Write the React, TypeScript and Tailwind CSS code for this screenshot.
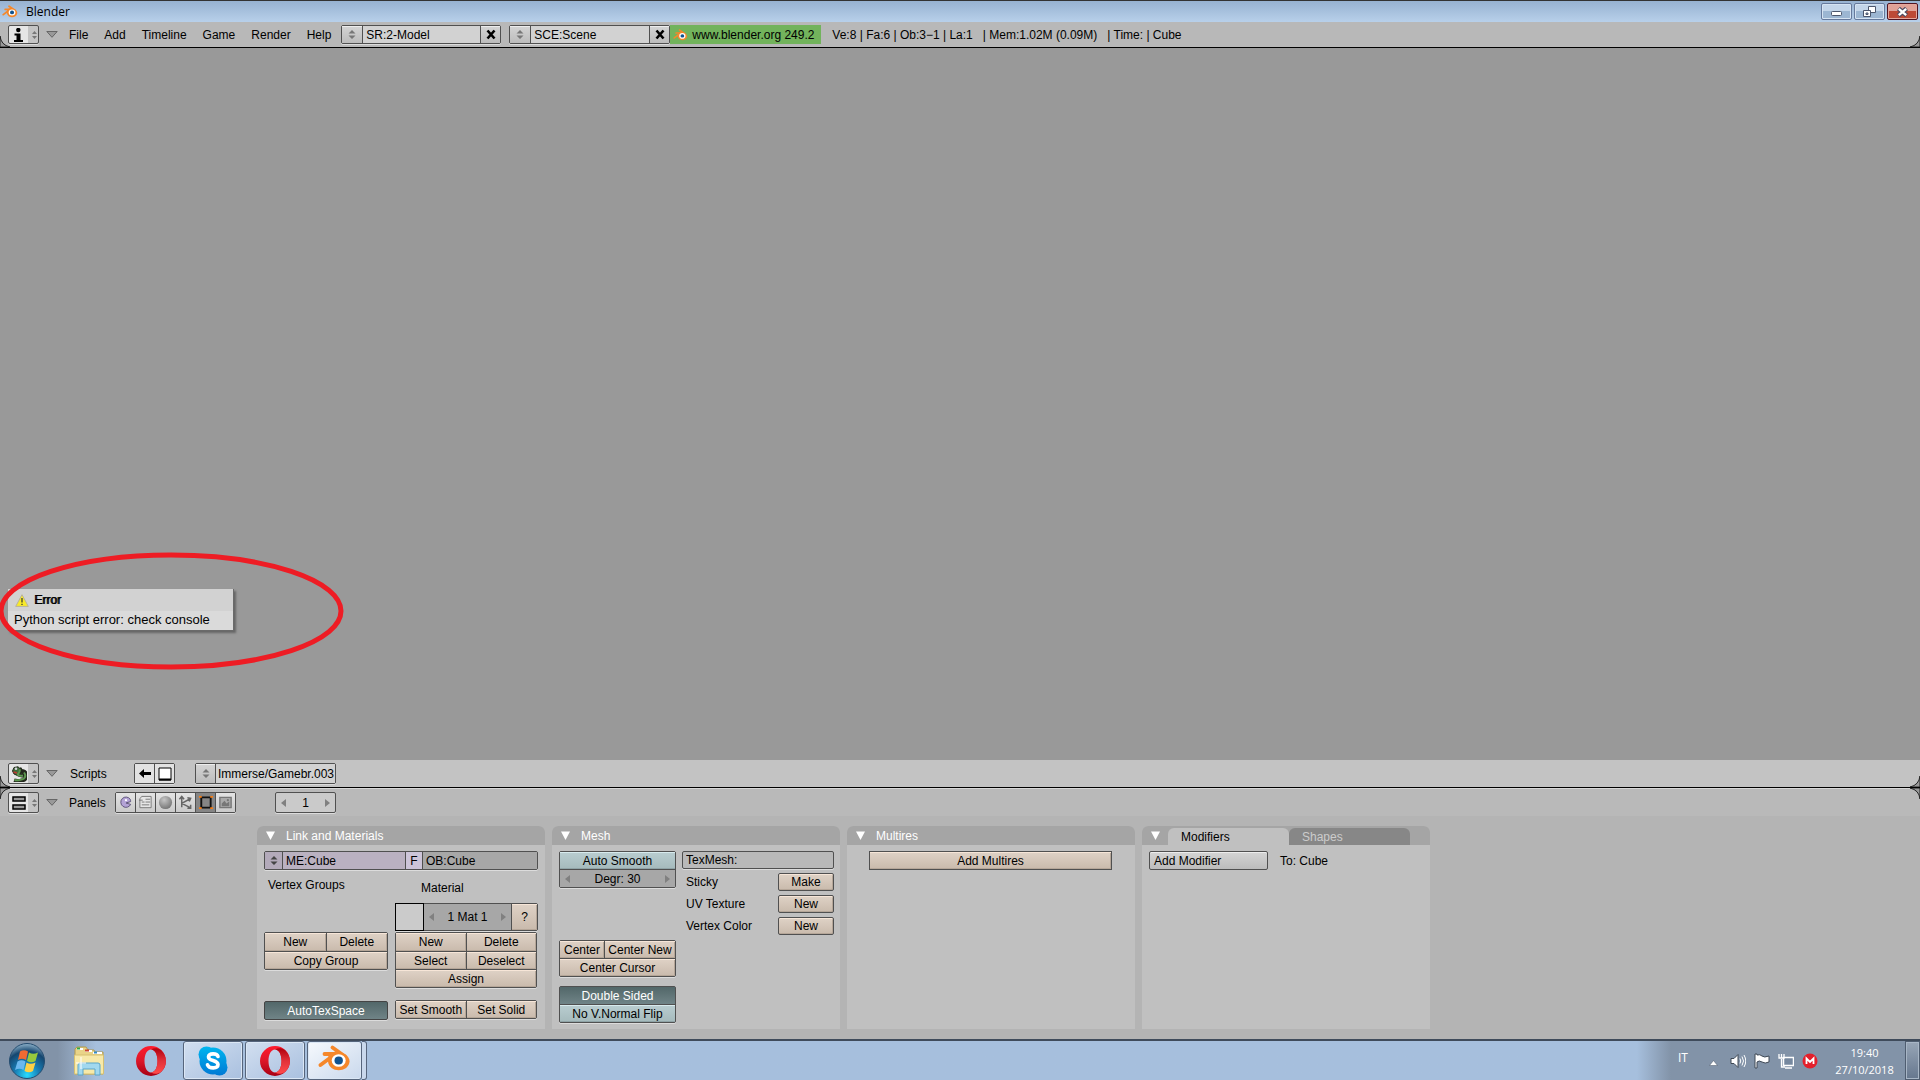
import type { ReactNode } from "react";

const ui = "font-['Liberation_Sans',Arial,sans-serif] text-[12px] leading-[16px] text-black";
const segoe = "font-['Open_Sans','Noto_Sans',sans-serif]";

const tan =
  "bg-linear-to-b from-[#dfd2c6] to-[#c9baac] shadow-[inset_0_1px_0_#f7e6d8,inset_-1px_-1px_0_#b5a698] text-center whitespace-nowrap";
const teal =
  "bg-linear-to-b from-[#b9cdd0] to-[#a5babc] shadow-[inset_0_1px_0_#d8ebee,inset_0_-1px_0_#8fa3a6] text-center whitespace-nowrap";
const tealOn =
  "bg-linear-to-b from-[#526769] to-[#708487] text-white text-center whitespace-nowrap";
const grey =
  "bg-linear-to-b from-[#d4d4d4] to-[#bcbcbc] shadow-[inset_0_1px_0_#ededed]";
const frame = "gap-px rounded-[2px] border border-[#505050] bg-[#505050] shadow-[0_1px_0_#dcdcdc]";

function BlenderLogo({ className }: { className: string }) {
  return (
    <svg viewBox="0 0 33 27" className={className} aria-hidden="true">
      <g stroke="#f5872a" strokeWidth="3.800" strokeLinecap="round" fill="none">
        <path d="M2.500 20 14 11.500M6.500 9H20M14.500 2.500 27 11.500" />
      </g>
      <path d="M13 8 20 5.500 27.500 9.500Q32 13 31.500 17C30 28 11 28 10 16.500V12Z" fill="#f5872a" />
      <ellipse cx="20.700" cy="15.500" rx="7" ry="6.300" fill="#fff" />
      <ellipse cx="20.700" cy="15.500" rx="4.200" ry="3.900" fill="#11538f" />
    </svg>
  );
}

function UpDown({ className = "text-[#777]" }: { className?: string }) {
  return (
    <svg viewBox="0 0 8 9" className={`h-[9px] w-2 shrink-0 ${className}`} aria-hidden="true">
      <path d="M4 0 7.500 3.500H.5ZM4 9 .5 5.500h7Z" fill="currentColor" />
    </svg>
  );
}

function TypeButton({ label, children }: { label: string; children: ReactNode }) {
  return (
    <button
      aria-label={label}
      className="flex h-[21px] w-[31px] shrink-0 items-center rounded-[2px] border border-[#505050] bg-linear-to-r from-[#e6e6e6] from-65% to-[#c4c4c4] to-65% shadow-[0_1px_0_#dcdcdc]"
    >
      <span className="flex w-5 justify-center">{children}</span>
      <svg viewBox="0 0 5 8" className="ml-[3px] h-2 w-[5px]" aria-hidden="true">
        <path d="M2.500 0 5 3H0ZM2.500 8 0 5h5Z" fill="#777" />
      </svg>
    </button>
  );
}

function Collapse() {
  return (
    <button aria-label="Toggle menus" className="ml-[7px] shrink-0">
      <svg viewBox="0 0 12 7" className="h-[7px] w-3">
        <path d="M.8.5h10.400L6 6.300Z" fill="#999" stroke="#666" />
      </svg>
    </button>
  );
}

function DataPicker({ label, value, width }: { label: string; value: string; width: string }) {
  return (
    <div className={`flex h-[19px] shrink-0 ${frame} ${width}`}>
      <button aria-label={`Browse ${label}`} className={`flex w-5 shrink-0 items-center justify-center ${grey}`}>
        <UpDown />
      </button>
      <input aria-label={label} defaultValue={value} className="w-0 min-w-0 flex-1 bg-[#d2d2d2] pl-[3px]" />
      <button aria-label={`Remove ${label}`} className={`flex w-[19px] shrink-0 items-center justify-center ${grey}`}>
        <svg viewBox="0 0 10 11" className="h-[11px] w-2.5" aria-hidden="true">
          <path d="M1.500 1.500 8.500 9.500M8.500 1.500 1.500 9.500" stroke="#000" strokeWidth="2.600" />
        </svg>
      </button>
    </div>
  );
}

function Panel({ title, children }: { title: string; children: ReactNode }) {
  return (
    <section className="flex w-72 shrink-0 flex-col bg-[#c0c0c0] rounded-t-md">
      <h2 className="flex h-[19px] items-center gap-[11px] rounded-t-md bg-[#a5a5a5] pl-[9px] font-normal text-white">
        <White />
        {title}
      </h2>
      <div className="flex-1 pt-1.5 pb-1.5 pl-[7px]">{children}</div>
    </section>
  );
}

function White() {
  return (
    <svg viewBox="0 0 9 9" className="h-[9px] w-[9px] shrink-0" aria-hidden="true">
      <path d="M0 .5h9L4.500 9Z" fill="#fff" />
    </svg>
  );
}

function Stepper({ label, left = "Decrease", right = "Increase", className }: { label: string; left?: string; right?: string; className: string }) {
  return (
    <div className={`flex items-center justify-between px-[5px] ${className}`}>
      <button aria-label={left}>
        <svg viewBox="0 0 5 8" className="h-2 w-[5px]"><path d="M5 0v8L0 4Z" fill="#808080" /></svg>
      </button>
      <span>{label}</span>
      <button aria-label={right}>
        <svg viewBox="0 0 5 8" className="h-2 w-[5px]"><path d="M0 0v8l5-4Z" fill="#808080" /></svg>
      </button>
    </div>
  );
}

function TitleBar() {
  const win =
    "flex h-[17px] w-[31px] items-center justify-center rounded-[2px] border border-[#66799b] bg-linear-to-b from-[#c3d5e9] from-50% to-[#9cb6d2] to-50% shadow-[inset_0_0_0_1px_#d5e3f2]";
  return (
    <header className={`flex h-[22px] shrink-0 items-center border-t border-[#333] bg-linear-to-b from-[#97b2d1] to-[#b8d0ea] pl-[2px] text-[12px] text-black ${segoe}`}>
      <BlenderLogo className="mb-px h-[13px] w-4" />
      <span className="ml-2">Blender</span>
      <div className="mr-[2px] ml-auto flex gap-[2px]">
        <button aria-label="Minimize" className={win}>
          <svg viewBox="0 0 12 6" className="mt-1 h-1.5 w-3"><rect x=".5" y=".5" width="10" height="4" rx="1" fill="#fff" stroke="#4c566c" /></svg>
        </button>
        <button aria-label="Restore" className={win}>
          <svg viewBox="0 0 13 12" className="h-3 w-[13px]">
            <path d="M5.500.5h7v6h-7Z" fill="#fff" stroke="#4c566c" />
            <path d="M.5 4.500h7v6h-7Z" fill="#fff" stroke="#4c566c" />
            <path d="M3 7h2v1.500H3Z" fill="#9cb6d2" stroke="#4c566c" />
          </svg>
        </button>
        <button aria-label="Close" className="flex h-[17px] w-[31px] items-center justify-center rounded-[2px] border border-[#511521] bg-linear-to-b from-[#e0a297] from-50% to-[#bd4a36] to-50% shadow-[inset_0_0_0_1px_#e5a79c]">
          <svg viewBox="0 0 13 10" className="h-2.5 w-[13px]">
            <path d="M2.500 1.500 10.500 8.500M10.500 1.500 2.500 8.500" stroke="#4c4a60" strokeWidth="4.600" />
            <path d="M2.800 1.800 10.200 8.200M10.200 1.800 2.800 8.200" stroke="#fff" strokeWidth="2.400" />
          </svg>
        </button>
      </div>
    </header>
  );
}

function InfoHeader() {
  return (
    <div className="relative flex h-[26px] shrink-0 items-center border-b border-black bg-[#b8b8b8] pl-2">
      <button aria-label="Window type: User Preferences" className="flex h-[19px] w-[31px] shrink-0 items-center rounded-[2px] border border-[#505050] bg-linear-to-r from-[#e6e6e6] from-65% to-[#c4c4c4] to-65% shadow-[0_1px_0_#dcdcdc]">
        <svg viewBox="0 0 9 14" className="ml-[5px] h-[14px] w-[9px]"><circle cx="4.300" cy="2" r="2.200" /><path d="M.5 5.500H6.500V12H9v2H0v-2h2.500V7.500H.5Z" /></svg>
        <svg viewBox="0 0 5 8" className="ml-[9px] h-2 w-[5px]"><path d="M2.500 0 5 3H0ZM2.500 8 0 5h5Z" fill="#777" /></svg>
      </button>
      <Collapse />
      <nav className="ml-[11px] flex shrink-0 gap-4">
        {["File", "Add", "Timeline", "Game", "Render", "Help"].map((m) => (
          <button key={m}>{m}</button>
        ))}
      </nav>
      <div className="ml-2.5 flex shrink-0 items-center">
        <DataPicker label="screen" value="SR:2-Model" width="w-40" />
        <div className="w-2" />
        <DataPicker label="scene" value="SCE:Scene" width="w-[161px]" />
      </div>
      <a href="#blender" className="flex h-[19px] w-[151px] shrink-0 items-center gap-1 overflow-hidden bg-[#72b35c] pl-[3px] whitespace-nowrap">
        <BlenderLogo className="h-3 w-[15px] shrink-0" />
        www.blender.org 249.2
      </a>
      <p className="ml-[11px] whitespace-pre">{"Ve:8 | Fa:6 | Ob:3\u22121 | La:1   | Mem:1.02M (0.09M)   | Time: | Cube"}</p>
      <svg viewBox="0 0 10 11" className="absolute bottom-0 left-0 h-[11px] w-2.5"><path d="M0 0Q1 9 10 11H0Z" fill="#999" stroke="#222" /></svg>
      <svg viewBox="0 0 10 11" className="absolute right-0 bottom-0 h-[11px] w-2.5"><path d="M10 0Q9 9 0 11H10Z" fill="#999" stroke="#222" /></svg>
    </div>
  );
}

function ErrorPopup() {
  return (
    <div role="alert" className="absolute bottom-[129px] left-2 h-[42px] w-[226px] border-r border-b border-[#6a6a6a] bg-[#dadada] shadow-[2px_2px_2px_#666]">
      <div className="flex h-[22px] items-center bg-[#d2d2d2] pl-[7px]">
        <svg viewBox="0 0 14 13" className="h-[13px] w-[14px]"><path d="M7 .7 13.300 12.400H.7Z" fill="#f8ea28" stroke="#b8b29a" /><path d="M7 4v4.500M7 9.700v1.300" stroke="#333" strokeWidth="1.200" /></svg>
        <strong className="ml-[5px] font-normal [text-shadow:1px_0_0_#000]">Error</strong>
      </div>
      <p className="pt-px pl-1.5 text-[13px] whitespace-nowrap">Python script error: check console</p>
    </div>
  );
}

function ScriptsHeader() {
  return (
    <div className="relative flex h-7 shrink-0 items-center border-b border-black bg-[#c3c3c3] pl-2">
      <TypeButton label="Window type: Scripts">
        <svg viewBox="0 0 16 16" className="h-4 w-4">
          <path d="M8.500 2.500c2 2 .5 3.500-1 5s3 1.500 4.500 2c2.500-1-.5-2 .5-4 3 1 3.500 5 1.500 7.500-2 2-8 2.500-11 1.500" fill="none" stroke="#23281c" strokeWidth="4" />
          <path d="M1.500 5 3 1.500 7 .8 10 3.500 9 8 6.500 9.500 3 8Z" fill="#3f6a3b" stroke="#23281c" />
          <path d="M8.500 3.500c1 2-.5 3-1.500 4.500s3.500 2 5 1.500M13 6.500c1.500 2 1.500 4.500 0 6-2 1.500-7 2-9.500 1.500" fill="none" stroke="#5d9650" strokeWidth="2" />
          <path d="M2.500 6 6 7" stroke="#c0392f" strokeWidth="1.600" />
          <circle cx="5" cy="2.800" r="1.300" fill="#d5d5dd" />
        </svg>
      </TypeButton>
      <Collapse />
      <button className="ml-3 w-10 text-left">Scripts</button>
      <div className={`ml-6 flex h-[21px] ${frame}`}>
        <button aria-label="Back" className="flex w-[19px] items-center justify-center bg-[#e2e2e2]">
          <svg viewBox="0 0 12 9" className="h-[9px] w-3"><path d="M5 0v3h7v3H5v3L0 4.500Z" /></svg>
        </button>
        <button aria-label="Full window" className="flex w-[19px] items-center justify-center bg-[#e2e2e2]">
          <svg viewBox="0 0 14 14" className="h-[14px] w-[14px]"><path d="M1 1h12v12H1Z" fill="#fff" stroke="#000" /><path d="M1 12.500h12" stroke="#000" strokeWidth="2" /></svg>
        </button>
      </div>
      <div className={`ml-5 flex h-[21px] w-[141px] ${frame}`}>
        <button aria-label="Browse scripts" className={`flex w-[19px] shrink-0 items-center justify-center ${grey}`}><UpDown /></button>
        <input aria-label="Script" defaultValue="Immerse/Gamebr.003" className="w-0 min-w-0 flex-1 bg-[#d2d2d2] pl-[2px]" />
      </div>
      <svg viewBox="0 0 10 11" className="absolute bottom-0 left-0 h-[11px] w-2.5"><path d="M0 0Q1 9 10 11H0Z" fill="#999" stroke="#222" /></svg>
      <svg viewBox="0 0 10 11" className="absolute right-0 bottom-0 h-[11px] w-2.5"><path d="M10 0Q9 9 0 11H10Z" fill="#999" stroke="#222" /></svg>
    </div>
  );
}

const contexts: { name: string; icon: ReactNode }[] = [
  {
    name: "Logic",
    icon: (
      <>
        <path d="M13 4.500A5.500 5.500 0 1 0 13.500 10L8.500 8.500 13.500 7A5 5 0 0 0 13 4.500Z" fill="#b4a3d6" stroke="#5b5177" />
        <circle cx="8.500" cy="5.500" r="1.200" fill="#fff" />
      </>
    ),
  },
  {
    name: "Script",
    icon: (
      <>
        <path d="M4 1.500h10v12H2V4Z" fill="#e6e6e6" stroke="#777" />
        <path d="M8 4.500h5M4 7.500h3M8 7.500h5M4 10.500h8M1 5.500h4" stroke="#777" />
      </>
    ),
  },
  {
    name: "Shading",
    icon: (
      <>
        <defs>
          <radialGradient id="ball" cx=".4" cy=".3" r=".7"><stop offset="0" stopColor="#c5c5c5" /><stop offset="1" stopColor="#777" /></radialGradient>
        </defs>
        <circle cx="8" cy="8" r="7" fill="url(#ball)" />
      </>
    ),
  },
  {
    name: "Object",
    icon: <path d="M4 13V2M1.500 4.500 4 1.500l2.500 3M4 9l9-5M10 3l3.500.5L12 7M4 9l9 4.500M13.500 10.500v3.500H10" fill="none" stroke="#666" strokeWidth="1.600" />,
  },
  {
    name: "Editing",
    icon: (
      <>
        <path d="M3.500 2.500h10v11h-10Z" fill="none" stroke="#111" strokeWidth="2" />
        <path d="M1 1h3v2H1ZM13 1h3v2h-3ZM1 13h3v2H1ZM13 13h3v2h-3Z" fill="#f47c14" />
      </>
    ),
  },
  {
    name: "Scene",
    icon: (
      <>
        <path d="M2 2.500h12v11H2Z" fill="#aaa" stroke="#777" strokeWidth="1.500" />
        <path d="M4 12V9l3-3 2 3 3-2v5Z" fill="#777" />
        <circle cx="10.500" cy="5.500" r="1.200" fill="#777" />
      </>
    ),
  },
];

function ButtonsHeader() {
  return (
    <div className="relative flex h-7 shrink-0 items-center border-t border-[#d8d8d8] bg-[#b9b9b9] pl-2">
      <TypeButton label="Window type: Buttons">
        <svg viewBox="0 0 14 14" className="h-[14px] w-[14px]"><path d="M1 1h12v4H1ZM1 9h12v4H1Z" fill="#999" stroke="#000" strokeWidth="1.500" /></svg>
      </TypeButton>
      <Collapse />
      <button className="ml-[11px] w-10 text-left">Panels</button>
      <div className={`ml-1.5 flex h-[21px] ${frame}`}>
        {contexts.map((c) => (
          <button
            key={c.name}
            aria-label={c.name}
            className={
              c.name === "Editing"
                ? "flex w-[19px] items-center justify-center bg-[#858585]"
                : "flex w-[19px] items-center justify-center bg-linear-to-b from-[#e4e4e4] to-[#cacaca]"
            }
          >
            <svg viewBox="0 0 16 16" className="h-[15px] w-[15px]">{c.icon}</svg>
          </button>
        ))}
      </div>
      <Stepper label="1" className="ml-[39px] h-[21px] w-[61px] rounded-[2px] border border-[#505050] bg-[#cacaca] shadow-[0_1px_0_#dcdcdc]" />
      <svg viewBox="0 0 10 11" className="absolute -top-px left-0 h-[11px] w-2.5"><path d="M0 11Q1 2 10 0H0Z" fill="#999" stroke="#222" /></svg>
      <svg viewBox="0 0 10 11" className="absolute -top-px right-0 h-[11px] w-2.5"><path d="M10 11Q9 2 0 0H10Z" fill="#999" stroke="#222" /></svg>
    </div>
  );
}

function LinkPanel() {
  return (
    <Panel title="Link and Materials">
      <div className={`flex h-[19px] w-[274px] ${frame}`}>
        <button aria-label="Browse mesh data" className="flex w-[17px] shrink-0 items-center justify-center bg-[#b3aaba]"><UpDown className="text-[#444]" /></button>
        <input aria-label="Mesh name" defaultValue="ME:Cube" className="w-0 min-w-0 flex-1 bg-[#bab1c1] pl-[3px]" />
        <button className="w-4 shrink-0 bg-[#cdc5d9]">F</button>
        <input aria-label="Object name" defaultValue="OB:Cube" className="w-[114px] shrink-0 bg-[#a7a7a7] pl-[3px]" />
      </div>
      <div className="flex gap-[7px]">
        <div className="w-[124px]">
          <p className="mt-[7px] pl-1">Vertex Groups</p>
          <div className={`mt-[39px] grid grid-cols-2 ${frame}`}>
            <button className={`h-[18px] ${tan}`}>New</button>
            <button className={`h-[18px] ${tan}`}>Delete</button>
            <button className={`col-span-2 h-[17px] ${tan}`}>Copy Group</button>
          </div>
          <button className={`mt-[31px] block h-[19px] w-full rounded-[2px] border border-[#444] shadow-[0_1px_0_#dcdcdc] ${tealOn}`}>AutoTexSpace</button>
        </div>
        <div className="w-[143px]">
          <p className="mt-2.5 pl-[26px]">Material</p>
          <div className={`mt-[7px] flex h-7 ${frame}`}>
            <button aria-label="Material color" className="w-[27px] bg-[#cbcbcb] outline outline-black" />
            <Stepper label="1 Mat 1" left="Previous material" right="Next material" className="flex-1 bg-[#a7a7a7]" />
            <button className={`w-[25px] ${tan}`}>?</button>
          </div>
          <div className={`mt-px grid w-[142px] grid-cols-2 ${frame}`}>
            <button className={`h-[18px] ${tan}`}>New</button>
            <button className={`h-[18px] ${tan}`}>Delete</button>
            <button className={`h-[17px] ${tan}`}>Select</button>
            <button className={`h-[17px] ${tan}`}>Deselect</button>
            <button className={`col-span-2 h-[17px] ${tan}`}>Assign</button>
          </div>
          <div className={`mt-3 grid h-[19px] w-[142px] grid-cols-2 ${frame}`}>
            <button className={tan}>Set Smooth</button>
            <button className={tan}>Set Solid</button>
          </div>
        </div>
      </div>
    </Panel>
  );
}

function MeshPanel() {
  return (
    <Panel title="Mesh">
      <div className="flex gap-[6px]">
        <div className="w-[117px]">
          <div className={`grid ${frame}`}>
            <button className={`h-[17px] ${teal}`}>Auto Smooth</button>
            <Stepper label="Degr: 30" className="h-[17px] bg-[#a7a7a7]" />
          </div>
          <div className={`mt-[52px] grid grid-cols-[44px_1fr] ${frame}`}>
            <button className={`h-[17px] ${tan}`}>Center</button>
            <button className={`h-[17px] ${tan}`}>Center New</button>
            <button className={`col-span-2 h-[17px] ${tan}`}>Center Cursor</button>
          </div>
          <div className={`mt-[9px] grid ${frame}`}>
            <button className={`h-[17px] ${tealOn}`}>Double Sided</button>
            <button className={`h-[17px] ${teal}`}>No V.Normal Flip</button>
          </div>
        </div>
        <div className="w-[152px]">
          <input aria-label="TexMesh" defaultValue="TexMesh:" className="block h-[18px] w-full rounded-[2px] border border-[#505050] bg-[#b9b9b9] pl-[3px] shadow-[0_1px_0_#dcdcdc]" />
          <div className="mt-1 grid gap-[4px]">
            {[["Sticky", "Make"], ["UV Texture", "New"], ["Vertex Color", "New"]].map(([name, action]) => (
              <div key={name} className="flex items-center justify-between pl-1">
                <span>{name}</span>
                <button aria-label={`${action} ${name}`} className={`h-[18px] w-14 rounded-[2px] border border-[#505050] ${tan}`}>{action}</button>
              </div>
            ))}
          </div>
        </div>
      </div>
    </Panel>
  );
}

function ModifiersPanel() {
  return (
    <section className="w-72 shrink-0 rounded-t-md bg-[#c0c0c0]">
      <div className="flex h-[19px] items-end rounded-t-md bg-[#a5a5a5] pl-[9px]">
        <span className="mb-[5px]"><White /></span>
        <div role="tablist" className="ml-2 flex">
          <button role="tab" aria-selected="true" className="h-[17px] w-[121px] rounded-t-md bg-[#c0c0c0] pl-[13px] text-left">Modifiers</button>
          <button role="tab" aria-selected="false" className="h-[17px] w-[121px] rounded-t-md bg-[#878787] pl-[13px] text-left text-[#ccc]">Shapes</button>
        </div>
      </div>
      <div className="flex items-center gap-3 pt-1.5 pl-[7px]">
        <button className={`h-[19px] w-[119px] rounded-[2px] border border-[#505050] pl-1 text-left ${grey}`}>Add Modifier</button>
        <span>To: Cube</span>
      </div>
    </section>
  );
}

function Opera({ id }: { id: string }) {
  return (
    <svg viewBox="0 0 30 30" className="h-[30px] w-[30px]" aria-hidden="true">
      <defs>
        <linearGradient id={id} x1="0" y1="0" x2="0" y2="1"><stop offset="0" stopColor="#ff1b2d" /><stop offset=".5" stopColor="#dc1729" /><stop offset="1" stopColor="#a70014" /></linearGradient>
        <linearGradient id={`${id}-side`} x1="0" y1="0" x2="0" y2="1"><stop offset="0" stopColor="#b0000e" /><stop offset=".5" stopColor="#e2323a" /><stop offset="1" stopColor="#ff4b4b" /></linearGradient>
      </defs>
      <path fillRule="evenodd" d="M15 0a15 15 0 1 0 0 30A15 15 0 1 0 15 0Zm0 3.500C19 3.500 21.500 8.500 21.500 15S19 26.500 15 26.500 8.500 21.500 8.500 15 11 3.500 15 3.500Z" fill={`url(#${id})`} />
      <path d="M15 3.500c3.500-2 7-1.500 10 .5 6.500 6 6.500 16 0 22-3 2-6.500 2.500-10 .5 4 0 6.500-5 6.500-11.500S19 3.500 15 3.500Z" fill={`url(#${id}-side)`} />
    </svg>
  );
}

function Taskbar() {
  const task =
    "flex h-[39px] items-center justify-center rounded-[3px] border border-[#56657c] shadow-[inset_0_0_0_1px_#dbe7f5]";
  return (
    <footer className={`flex h-[41px] shrink-0 items-center border-t-2 border-[#3f4b5b] bg-linear-to-r from-[#8293a8] from-3% via-[#a6bfdd] via-5% to-[#a6bfdd] ${segoe}`}>
      <button aria-label="Start" className="ml-2 shrink-0">
        <svg viewBox="0 0 38 38" className="h-[38px] w-[38px]">
          <defs>
            <radialGradient id="orb" cx=".5" cy=".9" r=".9"><stop offset="0" stopColor="#28dcff" /><stop offset=".4" stopColor="#177bb2" /><stop offset=".75" stopColor="#15466f" /><stop offset="1" stopColor="#8fb2ca" /></radialGradient>
          </defs>
          <circle cx="19" cy="19" r="17.500" fill="url(#orb)" stroke="#254d70" />
          <path d="M12 9.500q4-2.500 8 0l-2 8.500q-4-2.500-8 0Z" fill="#ef6a32" />
          <path d="M21 10.500q4 2.500 9 0l-2.500 8.500q-4 2.500-8.500 0Z" fill="#97c93d" />
          <path d="M9.500 19.500q4-2.500 8 0l-2 8.500q-4-2.500-8.500 0Z" fill="#6bb8ee" />
          <path d="M18.500 20.500q4 2.500 9 0L25 29q-4 2.500-8.500 0Z" fill="#fdd045" />
        </svg>
      </button>
      <button aria-label="Explorer" className="ml-[27px] shrink-0">
        <svg viewBox="0 0 32 30" className="h-[30px] w-8">
          <path d="M2 28V3l2-2h9l2 3h6l1 2h8v22Z" fill="#e9d488" stroke="#b39a4d" />
          <path d="M4 3h6M12 5h7M20 7h9" stroke="#fff" strokeWidth="2" />
          <path d="M4 2.500h3" stroke="#31a84b" strokeWidth="2" /><path d="M12 4.500h4" stroke="#c9452e" strokeWidth="2" /><path d="M21 6.500h3" stroke="#338dc9" strokeWidth="2" />
          <path d="M1.500 9h29v19h-29Z" fill="#f7e9a9" stroke="#d6c071" />
          <path d="M5 29V19q0-2 2-2h18q2 0 2 2v10h-5v-6H10v6Z" fill="#a1d8ef" stroke="#5aa5c9" />
          <path d="M8 11v12M3 17h10" stroke="#fff" />
        </svg>
      </button>
      <button aria-label="Opera" className="ml-[31px] shrink-0"><Opera id="opera-pin" /></button>
      <button aria-label="Skype" className={`ml-[17px] w-[60px] shrink-0 bg-linear-to-br from-[#d2dff0] to-[#a9c0df] ${task}`}>
        <svg viewBox="0 0 30 30" className="h-[30px] w-[30px]">
          <defs><linearGradient id="sky" gradientUnits="userSpaceOnUse" x1="0" y1="0" x2="0" y2="30"><stop offset="0" stopColor="#00b7f0" /><stop offset="1" stopColor="#0078d4" /></linearGradient></defs>
          <g fill="url(#sky)"><circle cx="15" cy="15" r="13.500" /><circle cx="8.500" cy="8.500" r="8" /><circle cx="21.500" cy="21.500" r="8" /></g>
          <path d="M20 10.500C19 7 11 6.800 10.500 10.800c-.3 4.500 9.500 3 9.500 7.700 0 4.500-9 4.300-10.500.3" fill="none" stroke="#fff" strokeWidth="3.600" strokeLinecap="round" />
        </svg>
      </button>
      <button aria-label="Opera window" className={`ml-[2px] w-[60px] shrink-0 bg-linear-to-br from-[#d2dff0] to-[#a9c0df] ${task}`}><Opera id="opera-win" /></button>
      <div className="ml-[2px] flex shrink-0">
        <button aria-label="Blender window" className={`w-[55px] bg-linear-to-br from-[#f6f9fd] to-[#c9d8ec] ${task}`}><BlenderLogo className="mb-1 h-[27px] w-[33px]" /></button>
        <span className="h-[39px] w-[5px] rounded-r-[3px] border-y border-r border-[#56657c] bg-[#c9d8ec]" />
      </div>
      <div className="ml-auto flex h-full items-center bg-linear-to-r from-[#a6bfdd] to-[#8293a8] to-12% pl-[41px] text-white">
        <span className="mb-1.5 w-[31px] text-[12px]">IT</span>
        <button aria-label="Show hidden icons" className="mt-1"><svg viewBox="0 0 9 6" className="h-1.5 w-[9px]"><path d="M4.500.5 8.500 5.500H.5Z" fill="#fff" stroke="#4a5666" strokeWidth=".5" /></svg></button>
        <div className="mt-px ml-3 flex items-center gap-2">
          <svg viewBox="0 0 16 16" className="h-4 w-4"><path d="M1 5.500h3l4-4v13l-4-4H1Z" fill="#fff" stroke="#3e4855" /><path d="M10 5.500q1.500 2.500 0 5M12 3.500q3 4.500 0 9M14 2q3.500 6 0 12" stroke="#fff" fill="none" /></svg>
          <svg viewBox="0 0 16 16" className="h-4 w-4"><path d="M1 1h2v1q3-1 5 1t7 0v6q-4 2-7 0t-5 0v6H1Z" fill="#fff" stroke="#3e4855" /></svg>
          <svg viewBox="0 0 16 16" className="h-4 w-4"><path d="M5.500 4.500h10v8h-10Z" fill="#76889f" stroke="#fff" strokeWidth="1.500" /><path d="M7 15h7M3.500 6v8H7M1 1v4h5V1M3.500 1v4" stroke="#fff" strokeWidth="1.300" fill="none" /></svg>
          <svg viewBox="0 0 16 16" className="h-4 w-4"><circle cx="8" cy="8" r="7.500" fill="#e3202c" /><path d="M4.500 11V5.500L8 9l3.500-3.500V11" stroke="#fff" strokeWidth="1.800" fill="none" /></svg>
        </div>
        <time className="w-[87px] pl-1.5 text-center text-[11px] leading-[17px]">19:40<br />27/10/2018</time>
        <button aria-label="Show desktop" className="h-full w-[15px] border border-[#4f5d70] bg-linear-to-b from-[#98a6b7] to-[#66778e] shadow-[inset_0_0_0_1px_#a8b6c6]" />
      </div>
    </footer>
  );
}

export default function App() {
  return (
    <div className={`flex h-screen flex-col overflow-hidden bg-[#999] ${ui}`}>
      <TitleBar />
      <InfoHeader />
      <main className="relative flex-1 bg-[#999]">
        <ErrorPopup />
        <svg viewBox="0 0 344 118" className="absolute bottom-[90px] left-0 h-[118px] w-[344px]" aria-hidden="true">
          <ellipse cx="171" cy="59" rx="170" ry="56" fill="none" stroke="#ee1c24" strokeWidth="5" />
        </svg>
      </main>
      <ScriptsHeader />
      <ButtonsHeader />
      <div className="flex shrink-0 gap-[7px] bg-[#b4b4b4] pt-2.5 pb-2.5 pl-[257px]">
        <LinkPanel />
        <MeshPanel />
        <Panel title="Multires">
          <button className={`ml-[15px] block h-[19px] w-[243px] border border-[#505050] ${tan}`}>Add Multires</button>
        </Panel>
        <ModifiersPanel />
      </div>
      <Taskbar />
    </div>
  );
}
